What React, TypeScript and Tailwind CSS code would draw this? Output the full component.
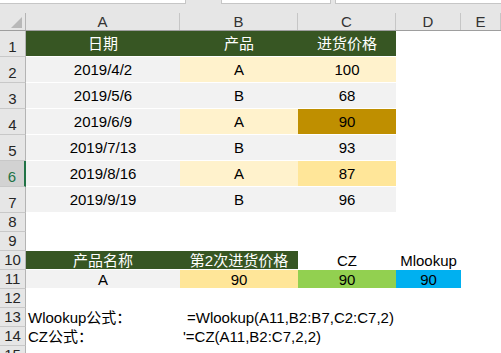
type Cell = {
  text?: string;
  bg?: string;
  color?: string;
  align?: 'center' | 'left';
  pad?: string;
};

const GRID = 'grid grid-cols-[26px_154px_118px_98px_65px_1fr]';
const FONT = { fontFamily: '"Liberation Sans", "Noto Sans CJK SC", sans-serif' };

const F2 = 'bg-[#f2f2f2]';
const Y1 = 'bg-[#fff2cc]';
const Y2 = 'bg-[#ffe699]';
const GR = 'bg-[#375623]';

function RowHead({ n, selected }: { n: number; selected?: boolean }) {
  return (
    <div
      className={`flex items-end justify-center pb-[2px] border-b border-[#c8c8c8] text-[15px] leading-[15px] ${
        selected
          ? 'bg-[#d2d2d2] text-[#217346] border-r-2 border-r-[#217346]'
          : 'bg-[#e6e6e6] text-[#262626] border-r border-r-[#b4b4b4]'
      }`}
    >
      {n}
    </div>
  );
}

function Row({ n, h, cells, selected }: { n: number; h: string; cells: Cell[]; selected?: boolean }) {
  const filled = [...cells];
  while (filled.length < 5) filled.push({});
  return (
    <div className={`${GRID} ${h}`}>
      <RowHead n={n} selected={selected} />
      {filled.map((c, i) => (
        <div
          key={i}
          className={`flex items-center border-b whitespace-nowrap text-[15px] leading-[17px] overflow-visible ${
            c.bg ? 'border-white' : 'border-transparent'
          } ${c.align === 'left' ? 'justify-start' : 'justify-center'} ${c.bg ?? ''} ${
            c.color ?? 'text-black'
          } ${c.pad ?? ''}`}
        >
          {c.text}
        </div>
      ))}
    </div>
  );
}

export default function App() {
  const letters = ['A', 'B', 'C', 'D', 'E'];
  return (
    <div className="w-[501px] h-[353px] overflow-hidden bg-white" style={FONT}>
      {/* formula bar remnant */}
      <div className="h-[13px] bg-[#e6e6e6] flex items-start">
        <div className="w-[186px] h-[4px] bg-white border-r border-b border-[#c6c6c6]" />
        <div className="w-[35px]" />
        <div className="w-[110px] h-[4px] bg-white border-l border-r border-b border-[#c6c6c6]" />
        <div className="w-[4px]" />
        <div className="flex-1 h-[4px] bg-white border-l border-b border-[#c6c6c6]" />
      </div>

      {/* column headers */}
      <div className={`${GRID} h-[18px] bg-[#e6e6e6] border-b border-[#9e9e9e]`}>
        <div className="relative border-r border-[#b4b4b4]">
          <svg className="absolute left-[11px] top-[4px]" width="11" height="11" viewBox="0 0 11 11">
            <polygon points="11,0 11,11 0,11" fill="#b8b8b8" />
          </svg>
        </div>
        {letters.map((l) => (
          <div
            key={l}
            className="flex items-end justify-center pb-[1px] border-r border-[#c6c6c6] text-[15px] leading-[15px] text-[#333]"
          >
            {l}
          </div>
        ))}
      </div>

      <Row n={1} h="h-[26px]" cells={[
        { text: '日期', bg: GR, color: 'text-white' },
        { text: '产品', bg: GR, color: 'text-white' },
        { text: '进货价格', bg: GR, color: 'text-white' },
      ]} />
      <Row n={2} h="h-[26px]" cells={[
        { text: '2019/4/2', bg: F2 },
        { text: 'A', bg: Y1 },
        { text: '100', bg: Y1 },
      ]} />
      <Row n={3} h="h-[26px]" cells={[
        { text: '2019/5/6', bg: F2 },
        { text: 'B', bg: F2 },
        { text: '68', bg: F2 },
      ]} />
      <Row n={4} h="h-[26px]" cells={[
        { text: '2019/6/9', bg: F2 },
        { text: 'A', bg: Y1 },
        { text: '90', bg: 'bg-[#bf8f00]' },
      ]} />
      <Row n={5} h="h-[26px]" cells={[
        { text: '2019/7/13', bg: F2 },
        { text: 'B', bg: F2 },
        { text: '93', bg: F2 },
      ]} />
      <Row n={6} h="h-[26px]" selected cells={[
        { text: '2019/8/16', bg: F2 },
        { text: 'A', bg: Y1 },
        { text: '87', bg: Y2 },
      ]} />
      <Row n={7} h="h-[26px]" cells={[
        { text: '2019/9/19', bg: F2 },
        { text: 'B', bg: F2 },
        { text: '96', bg: F2 },
      ]} />
      <Row n={8} h="h-[19px]" cells={[]} />
      <Row n={9} h="h-[19px]" cells={[]} />
      <Row n={10} h="h-[19px]" cells={[
        { text: '产品名称', bg: GR, color: 'text-white' },
        { text: '第2次进货价格', bg: GR, color: 'text-white' },
        { text: 'CZ' },
        { text: 'Mlookup' },
      ]} />
      <Row n={11} h="h-[19px]" cells={[
        { text: 'A', bg: F2 },
        { text: '90', bg: Y2 },
        { text: '90', bg: 'bg-[#92d050]' },
        { text: '90', bg: 'bg-[#00b0f0]' },
      ]} />
      <Row n={12} h="h-[19px]" cells={[]} />
      <Row n={13} h="h-[19px]" cells={[
        { text: 'Wlookup公式：', align: 'left', pad: 'pl-[2px]' },
        { text: '=Wlookup(A11,B2:B7,C2:C7,2)', align: 'left', pad: 'pl-[7px]' },
      ]} />
      <Row n={14} h="h-[19px]" cells={[
        { text: 'CZ公式：', align: 'left', pad: 'pl-[2px]' },
        { text: "'=CZ(A11,B2:C7,2,2)", align: 'left', pad: 'pl-[3px]' },
      ]} />
      <Row n={15} h="h-[19px]" cells={[]} />
    </div>
  );
}
